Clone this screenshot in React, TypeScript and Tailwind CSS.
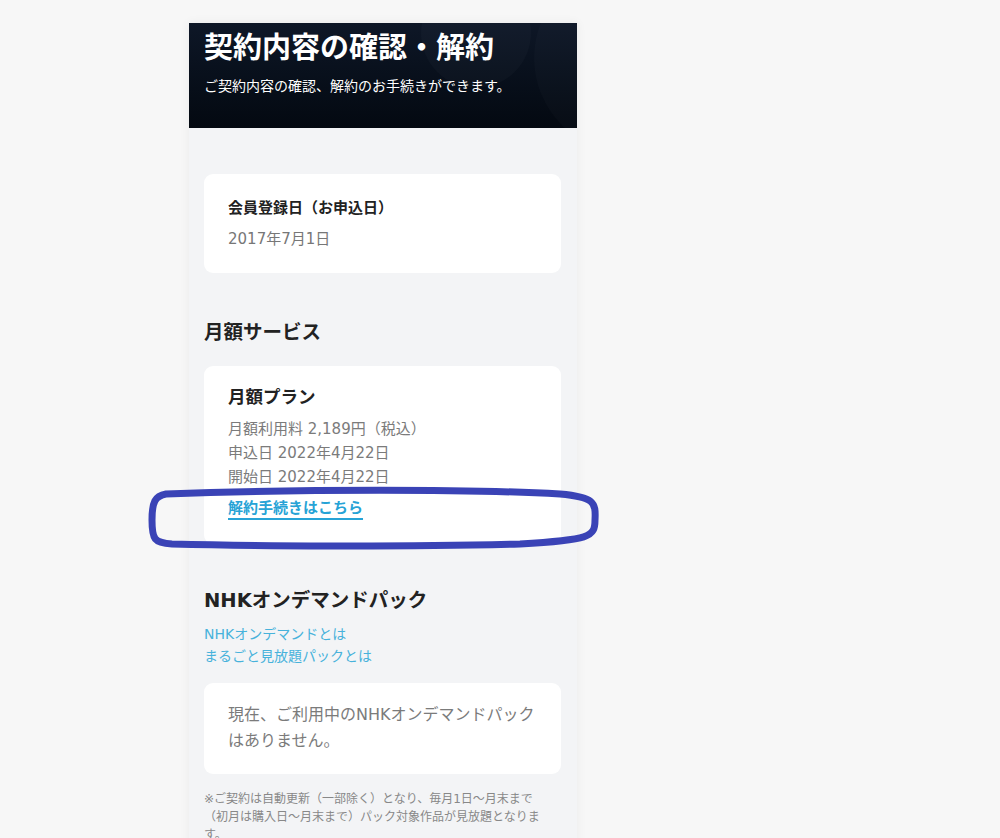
import React from "react";

const font = { fontFamily: '"DejaVu Sans", "Noto Sans CJK JP", "Noto Sans", sans-serif' };

export default function App() {
  return (
    <div className="relative min-h-[838px] w-full bg-[#f7f7f7] overflow-hidden" style={font}>
      <div className="ml-[189px] mt-[23px] w-[388px] bg-[#f3f4f6] shadow-[0_0_10px_rgba(0,0,0,0.06)] pb-[20px]">
        {/* Header */}
        <div className="relative h-[105px] overflow-hidden bg-gradient-to-b from-[#0e1727] to-[#040911] px-[15px]">
          <div className="absolute left-[232px] top-[-45px] h-[110px] w-[110px] rounded-full bg-white/[0.025]" />
          <div className="absolute left-[345px] top-[-60px] h-[190px] w-[190px] rounded-full bg-white/[0.02]" />
          <div className="relative pt-[6px]">
            <h1 className="text-[29px] leading-[38px] font-bold text-white">契約内容の確認・解約</h1>
            <p className="mt-[9px] text-[14px] leading-[20px] text-white">ご契約内容の確認、解約のお手続きができます。</p>
          </div>
        </div>

        <div className="px-[15px] pr-[16px] pt-[46px]">
          {/* Card 1 */}
          <div className="rounded-[9px] bg-white px-[24px] pt-[23px] pb-[23px]">
            <div className="text-[15px] leading-[22px] font-bold text-[#222]">会員登録日（お申込日）</div>
            <div className="mt-[9px] text-[15px] leading-[22px] text-[#777]">2017年7月1日</div>
          </div>

          {/* Monthly service */}
          <h2 className="mt-[46px] text-[19.5px] leading-[28px] font-bold text-[#222]">月額サービス</h2>
          <div className="mt-[19px] rounded-[9px] bg-white px-[24px] pt-[18px] pb-[24px]">
            <div className="text-[17.5px] leading-[26px] font-bold text-[#222]">月額プラン</div>
            <div className="mt-[7px] text-[15px] leading-[24px] text-[#7b7b7b]">
              <div>月額利用料 2,189円（税込）</div>
              <div>申込日 2022年4月22日</div>
              <div>開始日 2022年4月22日</div>
            </div>
            <div className="mt-[7px] text-[15px] leading-[24px]">
              <a className="font-bold text-[#27a3d6] underline underline-offset-[5px] decoration-[1.5px]" href="#">解約手続きはこちら</a>
            </div>
          </div>

          {/* NHK */}
          <h2 className="mt-[43px] text-[19.5px] leading-[28px] font-bold text-[#222]">NHKオンデマンドパック</h2>
          <div className="mt-[8px] text-[14px] leading-[22px] text-[#47b2db]">
            <div>NHKオンデマンドとは</div>
            <div>まるごと見放題パックとは</div>
          </div>
          <div className="mt-[16px] rounded-[9px] bg-white px-[24px] pt-[19px] pb-[20px]">
            <p className="text-[16px] leading-[26px] text-[#7b7b7b]">現在、ご利用中のNHKオンデマンドパック<br />はありません。</p>
          </div>
          <p className="mt-[16px] w-[340px] text-[12px] leading-[18px] text-[#888]">
            ※ご契約は自動更新（一部除く）となり、毎月1日～月末まで（初月は購入日～月末まで）パック対象作品が見放題となります。
          </p>
        </div>
      </div>

      {/* Hand-drawn annotation ellipse */}
      <svg className="absolute left-0 top-0 pointer-events-none" width="1000" height="838">
        <path
          d="M 166 494 C 300 489, 470 489, 560 494 C 594 497, 596 502, 595 520 C 595 537, 590 540, 520 544 C 400 547, 250 546, 172 544 C 154 543, 152 539, 152 520 C 152 502, 155 496, 166 494 Z"
          fill="none"
          stroke="#3a43b6"
          strokeWidth="7"
        />
      </svg>
    </div>
  );
}
